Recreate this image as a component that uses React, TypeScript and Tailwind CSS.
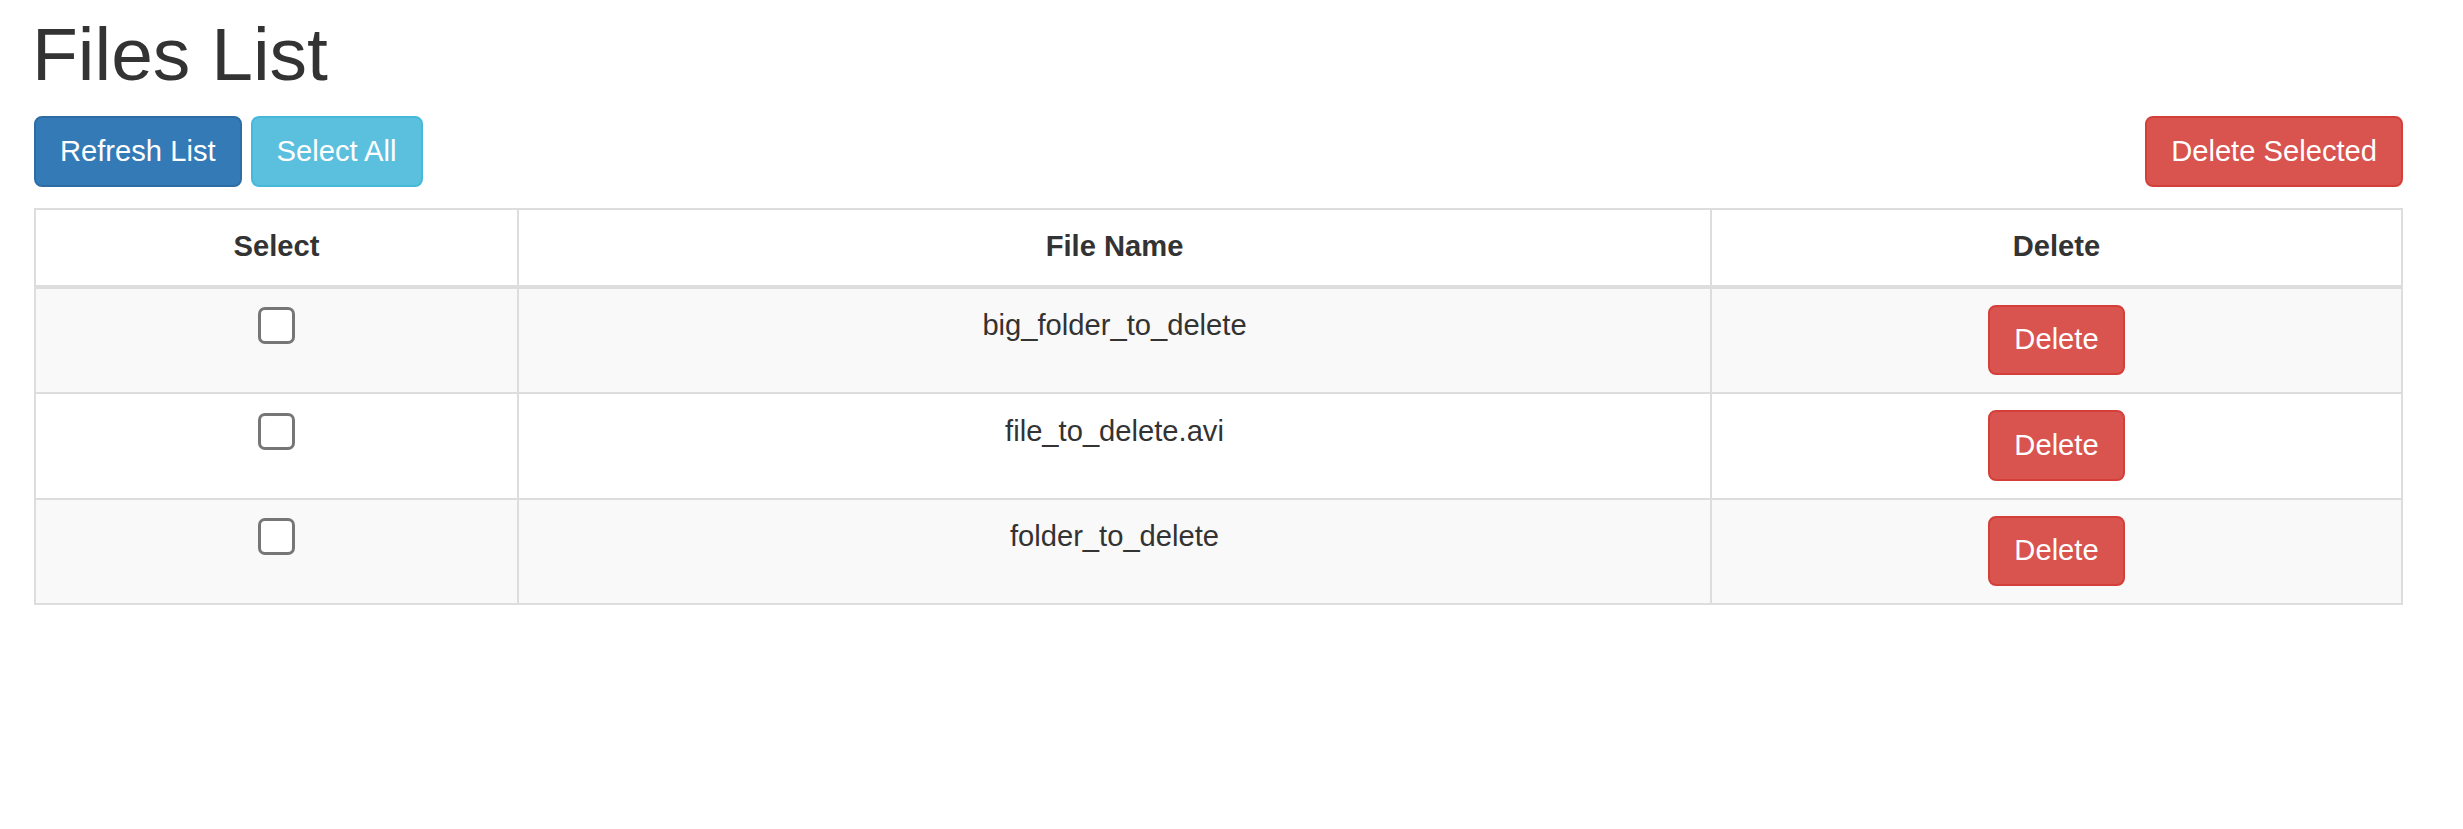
import React from "react";

const files = ["big_folder_to_delete", "file_to_delete.avi", "folder_to_delete"];

function Btn({
  children,
  className,
}: {
  children: React.ReactNode;
  className: string;
}) {
  return (
    <button
      type="button"
      className={
        "px-[24px] py-[12.5px] text-[29.17px] leading-[41.7px] border-2 rounded-[8px] text-white whitespace-nowrap " +
        className
      }
    >
      {children}
    </button>
  );
}

export default function App() {
  return (
    <div className="min-h-screen bg-white text-[#333] font-['Liberation_Sans',Arial,Helvetica,sans-serif]">
      <div className="pl-[32px]">
        <h1 className="mt-[13px] text-[75px] leading-[82.5px] font-normal">Files List</h1>
      </div>
      <div className="ml-[34px] w-[2369px]">
        <div className="mt-[20.5px] flex items-center justify-between">
          <div className="flex gap-[9px]">
            <Btn className="bg-[#337ab7] border-[#2e6da4]">Refresh List</Btn>
            <Btn className="bg-[#5bc0de] border-[#46b8da]">Select All</Btn>
          </div>
          <Btn className="bg-[#d9534f] border-[#d43f3a]">Delete Selected</Btn>
        </div>

        <div className="mt-[21px] border-2 border-[#ddd]">
          <div className="grid grid-cols-[481px_1193px_1fr] border-b-4 border-[#ddd] bg-white text-[29.17px] leading-[41.7px] font-bold">
            <div className="h-[75px] flex items-center justify-center">Select</div>
            <div className="h-[75px] flex items-center justify-center border-l-2 border-[#ddd]">File Name</div>
            <div className="h-[75px] flex items-center justify-center border-l-2 border-[#ddd]">Delete</div>
          </div>
          {files.map((f, i) => (
            <div
              key={f}
              className={
                "grid grid-cols-[481px_1193px_1fr] text-[29.17px] leading-[41.7px] " +
                (i % 2 === 0 ? "bg-[#f9f9f9] " : "bg-white ") +
                (i < files.length - 1 ? "border-b-2 border-[#ddd]" : "")
              }
            >
              <div className="h-[103.5px] flex justify-center pt-[18.7px]">
                <div className="w-[37px] h-[37px] rounded-[7px] border-[3px] border-[#767676] bg-white" />
              </div>
              <div className="h-[103.5px] flex justify-center pt-[16.7px] border-l-2 border-[#ddd]">
                <span>{f}</span>
              </div>
              <div className="h-[103.5px] flex justify-center items-start pt-[16px] border-l-2 border-[#ddd]">
                <Btn className="bg-[#d9534f] border-[#d43f3a]">Delete</Btn>
              </div>
            </div>
          ))}
        </div>
      </div>
    </div>
  );
}
